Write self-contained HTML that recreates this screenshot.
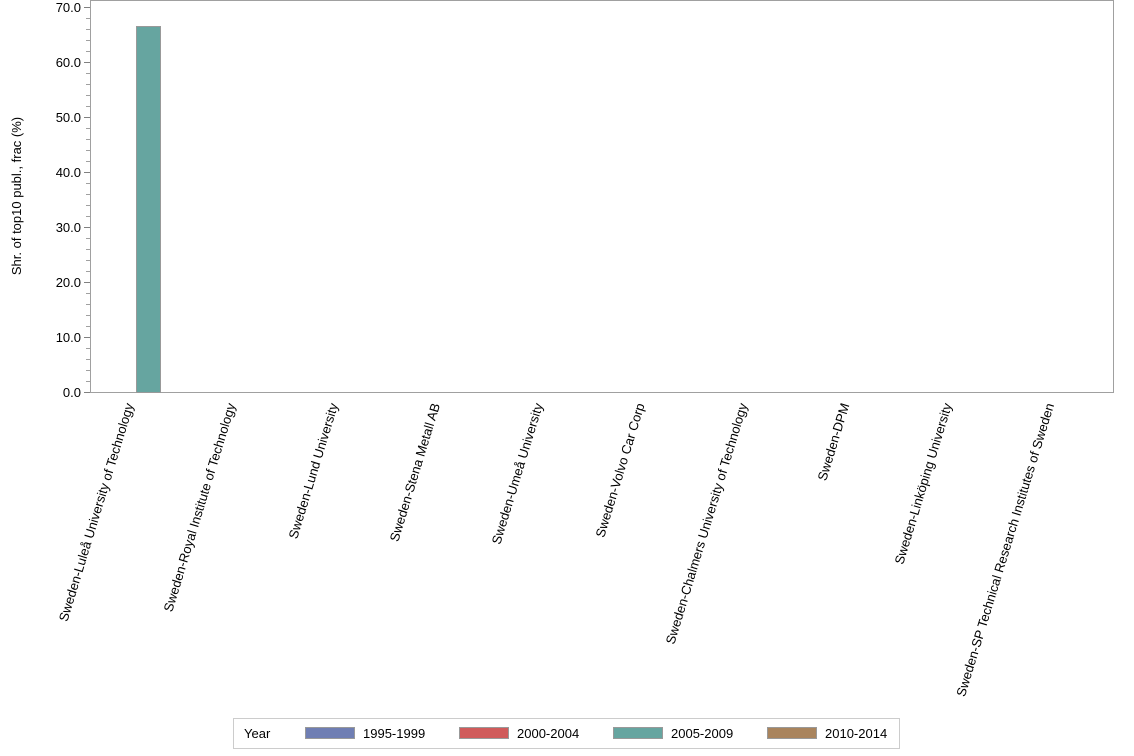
<!DOCTYPE html><html><head><style>
body{margin:0;width:1134px;height:756px;background:#fff;font-family:"Liberation Sans",sans-serif;position:relative;overflow:hidden}
.l{position:absolute;font-size:13px;white-space:nowrap;transform-origin:100% 50%;transform:rotate(-73deg);color:#000}
</style></head><body>
<svg width="1134" height="756" style="position:absolute;left:0;top:0" font-family="Liberation Sans" font-size="13">
<rect x="90.5" y="0.5" width="1023" height="392" fill="none" stroke="#a0a0a0"/>
<g stroke="#808080">
<line x1="84" y1="392.5" x2="90" y2="392.5"/><line x1="84" y1="337.5" x2="90" y2="337.5"/><line x1="84" y1="282.5" x2="90" y2="282.5"/><line x1="84" y1="227.5" x2="90" y2="227.5"/><line x1="84" y1="172.5" x2="90" y2="172.5"/><line x1="84" y1="117.5" x2="90" y2="117.5"/><line x1="84" y1="62.5" x2="90" y2="62.5"/><line x1="84" y1="7.5" x2="90" y2="7.5"/>
</g>
<g stroke="#a0a0a0" id="m"></g>
<g text-anchor="end" fill="#000">
<text x="81" y="397">0.0</text><text x="81" y="342">10.0</text><text x="81" y="287">20.0</text><text x="81" y="232">30.0</text><text x="81" y="177">40.0</text><text x="81" y="122">50.0</text><text x="81" y="67">60.0</text><text x="81" y="12">70.0</text>
</g>
<text transform="translate(21,196) rotate(-90)" text-anchor="middle">Shr. of top10 publ., frac (%)</text>
<rect x="136.5" y="26.5" width="24" height="366" fill="#66a5a0" stroke="#999"/>
<rect x="233.5" y="718.5" width="666" height="30" fill="#fff" stroke="#ccc"/>
<text x="244" y="738">Year</text>
<rect x="305.5" y="727.5" width="49" height="11" fill="#6f7eb3" stroke="#999"/><text x="363" y="738">1995-1999</text>
<rect x="459.5" y="727.5" width="49" height="11" fill="#d05b5b" stroke="#999"/><text x="517" y="738">2000-2004</text>
<rect x="613.5" y="727.5" width="49" height="11" fill="#66a5a0" stroke="#999"/><text x="671" y="738">2005-2009</text>
<rect x="767.5" y="727.5" width="49" height="11" fill="#a9845d" stroke="#999"/><text x="825" y="738">2010-2014</text>
</svg>
<script>
var g=document.getElementById('m'),s='';
for(var y=392;y>=7;y-=11){if((392-y)%55)s+='<line x1="86" y1="'+(y+.5)+'" x2="90" y2="'+(y+.5)+'"/>';}
g.innerHTML=s;
</script>
<div id="labs"></div>
<script>
var L=["Sweden-Luleå University of Technology","Sweden-Royal Institute of Technology","Sweden-Lund University","Sweden-Stena Metall AB","Sweden-Umeå University","Sweden-Volvo Car Corp","Sweden-Chalmers University of Technology","Sweden-DPM","Sweden-Linköping University","Sweden-SP Technical Research Institutes of Sweden"];
var h='';
for(var i=0;i<L.length;i++){var cx=141+i*102.3;
h+='<div class="l" style="right:'+(1134-cx+12)+'px;top:396px">'+L[i]+'</div>';}
document.getElementById('labs').innerHTML=h;
</script>
</body></html>
